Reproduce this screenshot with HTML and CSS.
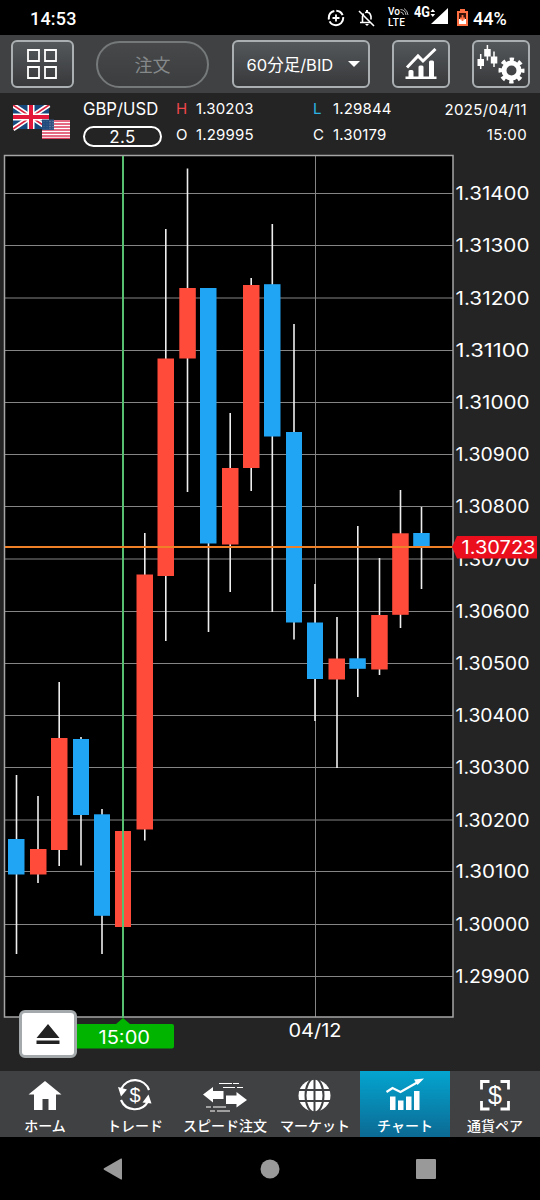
FILE: index.html
```html
<!DOCTYPE html>
<html lang="ja">
<head>
    <meta charset="UTF-8">
    <meta name="viewport" content="width=device-width, initial-scale=1.0">
    <title>チャート GBP/USD</title>
    <link rel="stylesheet" href="styles.css">
</head>
<body>
    <div class="status-bar">
        <span class="clock">14:53</span>
        <svg class="status-icons" width="144" height="36" viewBox="326 0 144 36">
            <g fill="none" stroke="#fff" stroke-width="2">
                <circle cx="336" cy="18" r="7.200" stroke-dasharray="19 2 11 2 8 2"/>
                <path d="M332.500 18h7M336 14.500v7" stroke-width="1.800"/>
                <path d="M359 11l15 15" stroke-width="1.600"/>
                <path d="M362.500 22.500v-6l1-3M365 12.500q5-1.500 6 4v3M360 22.500h10" stroke-width="1.600"/>
            </g>
            <path d="M366 10h2v3h-2zM365 24h4l-2 2z" fill="#fff"/>
            <text x="388" y="15" class="tiny">Vo</text>
            <text x="388" y="26" class="tiny" textLength="17">LTE</text>
            <g fill="none" stroke="#bbb" stroke-width="1">
                <path d="M400.500 12q2.500 0 3 3M400.500 9.500q5 .5 5.500 5.500M404 8.500q3.500 2 4 6.500"/>
            </g>
            <text x="414" y="16.500" class="net" textLength="16" lengthAdjust="spacingAndGlyphs">4G</text>
            <path d="M430.500 12l2.300-3 2.300 3zM430.500 14h4.600l-2.300 3z" fill="#fff"/>
            <path d="M448 8v16h-17z" fill="#fff"/>
            <path d="M460 9h5v2h3v15h-11V11h3z" fill="#ff7043"/>
            <path d="M459 13h7v11h-7z" fill="#3a1208"/>
            <path d="M459 19h7v5h-7z" fill="#fff"/>
            <path d="M462.500 15v6M460 18.500h5" stroke="#ff7043" stroke-width="1.800"/>
        </svg>
        <span class="battery">44%</span>
    </div>

    <header class="toolbar">
        <button class="tool-btn btn-grid">
            <svg width="32" height="32" viewBox="0 0 32 32" fill="none" stroke="#fff" stroke-width="1.800">
                <path d="M2 2h11v11H2zM19 2h11v11H19zM2 19h11v11H2zM19 19h11v11H19z"/>
            </svg>
        </button>
        <button class="order-btn">注文</button>
        <button class="tool-btn btn-period"><span>60分足/BID</span><i class="caret"></i></button>
        <button class="tool-btn btn-chart">
            <svg width="32" height="32" viewBox="0 0 32 32" fill="#fff">
                <path d="M.5 28.500h31V31H.5zM3.500 23.500q0-1.500 1.500-1.500h2q1.500 0 1.500 1.500V29h-5zM13.500 19q0-1.500 1.500-1.500h2q1.500 0 1.500 1.500v10h-5zM24 14q0-1.500 1.500-1.500h2q1.500 0 1.500 1.500v15h-5z"/>
                <path d="M2 19.500L13 8l5 5L30.500 1" fill="none" stroke="#fff" stroke-width="3"/>
            </svg>
        </button>
        <button class="tool-btn btn-setting">
            <svg width="52" height="42" viewBox="0 0 52 42" fill="#fff">
                <path d="M2.500 16h6.500v7H2.500zM9.200 6h6.500v7.500H9.200zM15.800 13.500h6.500v7h-6.500z"/>
                <path d="M5.700 11v15M12.400 2v15.500M19 8.500v15.500" stroke="#fff" stroke-width="1.500"/>
                <circle cx="36.500" cy="27.500" r="7.500" fill="none" stroke="#fff" stroke-width="5"/>
                <circle cx="36.500" cy="27.500" r="11.200" fill="none" stroke="#fff" stroke-width="3.600" stroke-dasharray="4.300 4.496" stroke-dashoffset="2.150"/>
            </svg>
        </button>
    </header>

    <section class="quote">
        <svg class="flags" width="58" height="34" viewBox="0 0 58 34">
            <path d="M0 0h36v24H0z" fill="#15487c"/>
            <path d="M0 0l36 24M36 0L0 24" stroke="#fff" stroke-width="5"/>
            <path d="M0 0l36 24M36 0L0 24" stroke="#d8203c" stroke-width="1.600"/>
            <path d="M18 0v24M0 12h36" stroke="#fff" stroke-width="7"/>
            <path d="M18 0v24M0 12h36" stroke="#e3173a" stroke-width="4"/>
            <path d="M29 15h28v19H29z" fill="#fff"/>
            <path d="M29 16h28M29 19h28M29 22h28M29 25h28M29 28h28M29 31h28M29 33.500h28" stroke="#dc3b5a" stroke-width="1.500"/>
            <path d="M29 14.500h12V25H29z" fill="#34527f"/>
            <path d="M31 16v8M34 16v8M37 16v8M40 16v8" stroke="#7f94b4" stroke-dasharray="1 1.500"/>
            <path d="M29 15h7v9h-7z" fill="#15487c" opacity=".6"/>
        </svg>
        <div class="pair">
            <span class="pair-name">GBP/USD</span>
            <span class="spread">2.5</span>
        </div>
        <div class="prices">
            <span class="high">H</span><span>1.30203</span>
            <span>O</span><span>1.29995</span>
        </div>
        <div class="prices">
            <span class="low">L</span><span>1.29844</span>
            <span>C</span><span>1.30179</span>
        </div>
        <div class="datetime">
            <span>2025/04/11</span>
            <span>15:00</span>
        </div>
    </section>

    <main class="chart">
        <svg class="chart-svg" width="540" height="918" viewBox="0 153 540 918">
            <rect x="4.500" y="155.500" width="448.500" height="861.500" class="plot"/>

            <!-- grid -->
            <path class="grid" d="M5 193.500H453M5 245.500H453M5 298H453M5 350.500H453M5 402.500H453M5 454.500H453M5 506.500H453M5 559H453M5 611.500H453M5 663.500H453M5 715.500H453M5 767.500H453M5 820H453M5 871.500H453M5 924.500H453M5 976.500H453M315.500 156V1017"/>

            <!-- wicks -->
            <path class="wick" d="M16.500 775V954M38 796V883M59.200 682V866M81 737V865.500M102 809V954M144.800 533V840.500M165.800 229V641M187.500 168.500V492M208.500 500V632M230.200 413V592M251.200 278V491M272.300 224V612M294 324V639.500M315 584V721M337 617V768M357.800 526V697M379.500 558V675M400.500 490V628M421.500 507V589"/>

            <g class="up">
                <rect x="30" y="849" width="16.500" height="25.500"/>
                <rect x="51" y="738" width="16.500" height="112"/>
                <rect x="115" y="831" width="16" height="96"/>
                <rect x="136.500" y="574.500" width="16.500" height="255"/>
                <rect x="157.500" y="358.500" width="16.500" height="217.500"/>
                <rect x="179.300" y="288" width="16.500" height="70.500"/>
                <rect x="222" y="468" width="16.500" height="76.500"/>
                <rect x="243" y="285" width="16.500" height="183"/>
                <rect x="328.500" y="658.500" width="16.500" height="21"/>
                <rect x="371.200" y="615" width="16.500" height="54.500"/>
                <rect x="392.200" y="533.300" width="16.500" height="81.500"/>
            </g>
            <g class="down">
                <rect x="8" y="839" width="16.500" height="35.500"/>
                <rect x="73" y="739" width="16" height="76"/>
                <rect x="94" y="814.300" width="16" height="101.500"/>
                <rect x="200" y="288" width="16.500" height="255.500"/>
                <rect x="264" y="284.200" width="16.500" height="152.300"/>
                <rect x="286" y="432" width="16" height="190.500"/>
                <rect x="307" y="622.500" width="16" height="56.500"/>
                <rect x="349.300" y="658.300" width="16.500" height="10.500"/>
                <rect x="413.200" y="533" width="16.500" height="14"/>
            </g>

            <path class="frame" d="M4.500 155.500H453V1017H4.500z"/>
            <path class="cursor" d="M123 156V1018"/>
            <path class="current" d="M5 547H456"/>

            <!-- price axis -->
            <g class="axis">
                <text x="455.500" y="200" textLength="74" lengthAdjust="spacingAndGlyphs">1.31400</text>
                <text x="455.500" y="252" textLength="74" lengthAdjust="spacingAndGlyphs">1.31300</text>
                <text x="455.500" y="304.500" textLength="74" lengthAdjust="spacingAndGlyphs">1.31200</text>
                <text x="455.500" y="357" textLength="74" lengthAdjust="spacingAndGlyphs">1.31100</text>
                <text x="455.500" y="409" textLength="74" lengthAdjust="spacingAndGlyphs">1.31000</text>
                <text x="455.500" y="461" textLength="74" lengthAdjust="spacingAndGlyphs">1.30900</text>
                <text x="455.500" y="513" textLength="74" lengthAdjust="spacingAndGlyphs">1.30800</text>
                <text x="455.500" y="565.500" textLength="74" lengthAdjust="spacingAndGlyphs">1.30700</text>
                <text x="455.500" y="618" textLength="74" lengthAdjust="spacingAndGlyphs">1.30600</text>
                <text x="455.500" y="670" textLength="74" lengthAdjust="spacingAndGlyphs">1.30500</text>
                <text x="455.500" y="722" textLength="74" lengthAdjust="spacingAndGlyphs">1.30400</text>
                <text x="455.500" y="774" textLength="74" lengthAdjust="spacingAndGlyphs">1.30300</text>
                <text x="455.500" y="826.500" textLength="74" lengthAdjust="spacingAndGlyphs">1.30200</text>
                <text x="455.500" y="878" textLength="74" lengthAdjust="spacingAndGlyphs">1.30100</text>
                <text x="455.500" y="931" textLength="74" lengthAdjust="spacingAndGlyphs">1.30000</text>
                <text x="455.500" y="983" textLength="74" lengthAdjust="spacingAndGlyphs">1.29900</text>
                <text x="288.500" y="1036.500" textLength="53" lengthAdjust="spacingAndGlyphs">04/12</text>
            </g>

            <path d="M452 547l5-11h80v22.500h-80z" fill="#eb0f1e"/>
            <text x="461.500" y="553.500" textLength="74" lengthAdjust="spacingAndGlyphs" class="label">1.30723</text>

            <path d="M70 1024h46l7-6 7 6h42q2 0 2 2v20.500q0 2-2 2H70z" fill="#00b400"/>
            <text x="98.500" y="1044" textLength="51.500" lengthAdjust="spacingAndGlyphs" class="label">15:00</text>
        </svg>
        <button class="eject">
            <svg width="24" height="21" viewBox="0 0 24 21" fill="#222">
                <path d="M12 0l11.500 14H.5zM.5 16.500h23V20H.5z"/>
            </svg>
        </button>
    </main>

    <nav class="tabs">
        <a class="tab">
            <svg width="50" height="36" viewBox="0 0 50 36" fill="#fff">
                <path d="M25 3l16.500 13.500H36V32h-7.500V21h-6v11H14V16.500H8.500z"/>
            </svg>
            <span>ホーム</span>
        </a>
        <a class="tab">
            <svg width="50" height="36" viewBox="0 0 50 36" fill="#fff">
                <path d="M11.500 10.500A15 15 0 0 1 39 12M11 22a15 15 0 0 0 27 1.500" fill="none" stroke="#fff" stroke-width="2.200"/>
                <path d="M8 9l9 2.500-6 7zM41.500 25.500l-9-1 6-8z"/>
                <text x="25" y="24" class="dollar">$</text>
            </svg>
            <span>トレード</span>
        </a>
        <a class="tab">
            <svg width="50" height="36" viewBox="0 0 50 36" fill="#fff">
                <path d="M3 16.500l10-7.500v4h10.500v8H13v3.500zM47 22L36.500 29.500V26H26v-8.500h10.500v-3.500z"/>
                <path d="M19 5.500h13M33 5.500h6M23 9.500h12M37 9.500h6M6 29h5M13 29h13M10 33h5M17 33h13" stroke="#fff" stroke-width="1.200"/>
            </svg>
            <span>スピード注文</span>
        </a>
        <a class="tab">
            <svg width="50" height="36" viewBox="0 0 50 36" fill="#fff">
                <circle cx="24.500" cy="17.500" r="16"/>
                <path d="M24.500 0v34M8 12h33M8 23h33" class="globe-line"/>
                <ellipse cx="24.500" cy="17.500" rx="9" ry="17" class="globe-line"/>
            </svg>
            <span>マーケット</span>
        </a>
        <a class="tab active">
            <svg width="50" height="36" viewBox="0 0 50 36" fill="#fff">
                <path d="M10 18.500h5.500V32H10zM18 22.500h5.500V32H18zM26 18.500h5.500V32H26zM34 13h5.500v19H34z"/>
                <path d="M6.500 14l6-4 8 4L38 4" fill="none" stroke="#fff" stroke-width="2.200"/>
                <path d="M34 1.500l10-1-6.500 6.500z"/>
            </svg>
            <span>チャート</span>
        </a>
        <a class="tab">
            <svg width="50" height="36" viewBox="0 0 50 36" fill="#fff">
                <path d="M11.500 11.500v-8h8M30.500 3.500h8v8M38.500 23v8h-8M19.500 31h-8v-8" fill="none" stroke="#fff" stroke-width="2.800"/>
                <text x="25" y="25.500" class="dollar big">$</text>
            </svg>
            <span>通貨ペア</span>
        </a>
    </nav>

    <footer class="system-nav">
        <svg width="20" height="22" viewBox="0 0 20 22" fill="#999"><path d="M18 .5q1-.5 1 1v19q0 1.500-1 1L1 11.700q-1-.7 0-1.400z"/></svg>
        <svg width="20" height="20" viewBox="0 0 20 20" fill="#999"><circle cx="10" cy="10" r="9.500"/></svg>
        <svg width="20" height="20" viewBox="0 0 20 20" fill="#999"><rect width="20" height="20" rx="1"/></svg>
    </footer>
</body>
</html>
```
FILE: styles.css
```css
* {
    box-sizing: border-box;
}
body {
    margin: 0;
    width: 540px;
    height: 1200px;
    overflow: hidden;
    background: #242424;
    color: #fff;
    font-family: Inter, "Noto Sans CJK JP", sans-serif;
}
button {
    margin: 0;
    padding: 0;
    font-family: inherit;
    color: #fff;
}

/* status bar */
.status-bar {
    display: flex;
    align-items: center;
    height: 35px;
    padding: 1px 0 0 30px;
    background: #000;
    font-family: Roboto, sans-serif;
    font-size: 18px;
    font-weight: 500;
}
.clock {
    width: 296px;
    letter-spacing: 0.2px;
}
.battery {
    margin-left: 3px;
}
.tiny {
    font-size: 10px;
    font-weight: 500;
    fill: #fff;
}
.net {
    font-size: 14px;
    font-weight: 700;
    fill: #fff;
}

/* toolbar */
.toolbar {
    display: flex;
    align-items: center;
    height: 58px;
    padding: 0 10.5px;
    background: #404143;
}
.tool-btn {
    display: flex;
    align-items: center;
    justify-content: center;
    height: 48px;
    border: 2.5px solid #aab0b2;
    border-radius: 6px;
    background: linear-gradient(#54585b, #38393b);
}
.btn-grid {
    width: 63px;
}
.order-btn {
    width: 113px;
    height: 47px;
    margin: 0 22.5px;
    border: 2px solid #75797a;
    border-radius: 24px;
    background: linear-gradient(#46484a, #3c3d3f);
    color: #85898a;
    font-size: 18px;
}
.btn-period {
    width: 138px;
    justify-content: space-between;
    padding: 0 8px 1px 13px;
    font-size: 16.5px;
}
.caret {
    border: 6px solid transparent;
    border-top-color: #fff;
    border-bottom: 0;
}
.btn-chart {
    width: 58px;
    margin: 0 22px;
}
.btn-setting {
    width: 58px;
}

/* quote header */
.quote {
    display: flex;
    height: 60px;
    padding: 5px 13px 0;
    font-size: 15px;
    line-height: 26px;
}
.quote span {
    white-space: nowrap;
}
.flags {
    margin-top: 7px;
}
.pair {
    display: flex;
    flex-direction: column;
    width: 79px;
    margin-left: 12px;
}
.pair-name {
    height: 28px;
    line-height: 23px;
    font-size: 16.7px;
}
.spread {
    height: 21px;
    border: 2px solid #fff;
    border-radius: 11px;
    font-size: 17px;
    line-height: 18px;
    text-align: center;
    letter-spacing: 0.4px;
}
.prices {
    display: grid;
    grid-template-columns: 20px 61px;
    grid-template-rows: 26px 26px;
    width: 137px;
    margin-left: 14px;
    line-height: 22px;
    letter-spacing: 0.15px;
}
.prices + .prices {
    width: 90px;
    margin-left: 0;
}
.high {
    color: #f0474b;
}
.low {
    color: #2cb5e4;
}
.datetime {
    display: flex;
    flex-direction: column;
    flex: 1;
    text-align: right;
    line-height: 23px;
    gap: 2px;
    letter-spacing: 0.35px;
}

/* chart */
.chart {
    position: relative;
    height: 918px;
}
.chart-svg {
    display: block;
}
.plot {
    fill: #000;
}
.frame {
    fill: none;
    stroke: #a5a5a5;
    stroke-width: 1.5;
}
.grid {
    stroke: #858585;
    stroke-width: 1;
}
.wick {
    stroke: #eee;
    stroke-width: 1.6;
}
.up {
    fill: #ff4b3a;
}
.down {
    fill: #20a4f4;
}
.cursor {
    stroke: #57c070;
    stroke-width: 2;
}
.current {
    stroke: #f08028;
    stroke-width: 2;
}
.axis text,
.label {
    font-size: 18px;
    fill: #fff;
}
.eject {
    position: absolute;
    left: 19px;
    top: 857px;
    display: flex;
    align-items: center;
    justify-content: center;
    width: 58px;
    height: 48px;
    border: 3px solid #a4aaac;
    border-radius: 6px;
    background: #fff;
}

/* bottom tabs */
.tabs {
    display: grid;
    grid-template-columns: repeat(6, 1fr);
    grid-template-rows: 66px;
    height: 66px;
    background: #404143;
}
.tab {
    display: flex;
    flex-direction: column;
    align-items: center;
    padding-top: 7px;
    font-family: "Noto Sans CJK JP", sans-serif;
    font-size: 14px;
    font-weight: 500;
    line-height: 23px;
    white-space: nowrap;
}
.tab svg {
    flex: none;
}
.tab.active {
    background: linear-gradient(#03a5d0, #0c6a93);
}
.dollar {
    font-family: "Liberation Sans", sans-serif;
    font-size: 20px;
    text-anchor: middle;
}
.dollar.big {
    font-size: 25px;
}
.globe-line {
    fill: none;
    stroke: #404143;
    stroke-width: 2;
}

/* android navigation */
.system-nav {
    display: flex;
    align-items: center;
    justify-content: space-between;
    height: 63px;
    padding: 0 104px 0 103px;
    background: #000;
}
```
